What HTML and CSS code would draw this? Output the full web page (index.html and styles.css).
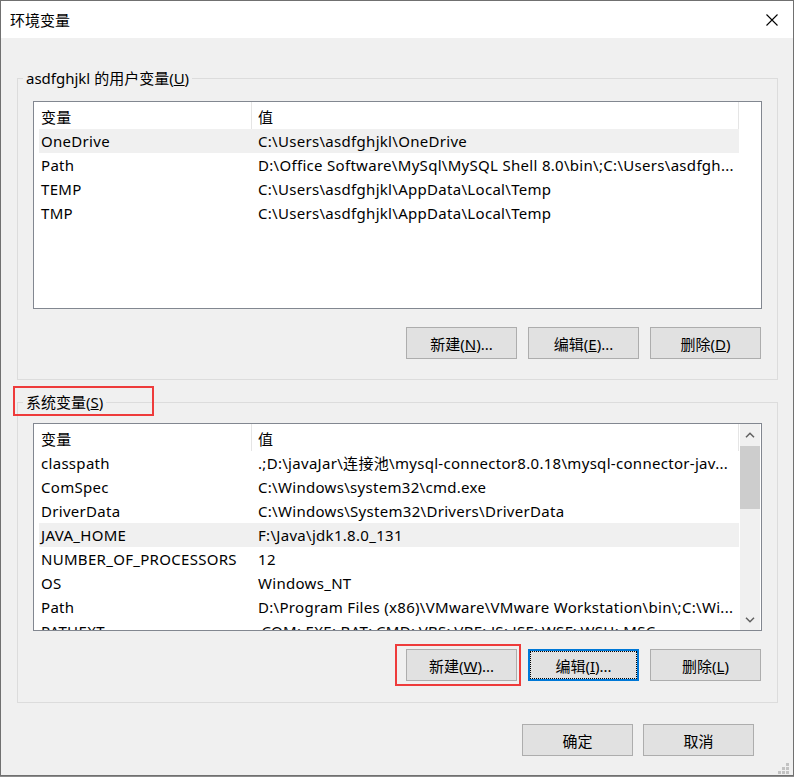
FILE: index.html
```html
<!DOCTYPE html>
<html lang="zh-CN">
<head>
    <meta charset="UTF-8">
    <title>环境变量</title>
    <link rel="stylesheet" href="styles.css">
</head>
<body>
    <div class="window">
        <div class="titlebar">
            <span class="title">环境变量</span>
            <div class="close">
                <svg width="12" height="12" viewBox="0 0 12 12"><path d="M0.5 0.5 L11.5 11.5 M11.5 0.5 L0.5 11.5" stroke="#000" stroke-width="1.1" fill="none"/></svg>
            </div>
        </div>

        <div class="content">
            <!-- user variables -->
            <fieldset class="group group-user">
                <legend>asdfghjkl 的用户变量(<u>U</u>)</legend>
                <div class="list">
                    <div class="list-view">
                        <div class="row head"><span>变量</span><span>值</span></div>
                        <div class="row sel"><span>OneDrive</span><span>C:\Users\asdfghjkl\OneDrive</span></div>
                        <div class="row"><span>Path</span><span>D:\Office Software\MySql\MySQL Shell 8.0\bin\;C:\Users\asdfgh...</span></div>
                        <div class="row"><span>TEMP</span><span>C:\Users\asdfghjkl\AppData\Local\Temp</span></div>
                        <div class="row"><span>TMP</span><span>C:\Users\asdfghjkl\AppData\Local\Temp</span></div>
                    </div>
                </div>
                <div class="buttons">
                    <button class="btn">新建(<u>N</u>)...</button>
                    <button class="btn">编辑(<u>E</u>)...</button>
                    <button class="btn">删除(<u>D</u>)</button>
                </div>
            </fieldset>

            <!-- system variables -->
            <fieldset class="group group-sys">
                <legend>系统变量(<u>S</u>)</legend>
                <div class="list">
                    <div class="list-view">
                        <div class="row head"><span>变量</span><span>值</span></div>
                        <div class="row"><span>classpath</span><span>.;D:\javaJar\连接池\mysql-connector8.0.18\mysql-connector-jav...</span></div>
                        <div class="row"><span>ComSpec</span><span>C:\Windows\system32\cmd.exe</span></div>
                        <div class="row"><span>DriverData</span><span>C:\Windows\System32\Drivers\DriverData</span></div>
                        <div class="row sel"><span>JAVA_HOME</span><span>F:\Java\jdk1.8.0_131</span></div>
                        <div class="row"><span>NUMBER_OF_PROCESSORS</span><span>12</span></div>
                        <div class="row"><span>OS</span><span>Windows_NT</span></div>
                        <div class="row"><span>Path</span><span>D:\Program Files (x86)\VMware\VMware Workstation\bin\;C:\Wi...</span></div>
                        <div class="row"><span>PATHEXT</span><span>.COM;.EXE;.BAT;.CMD;.VBS;.VBE;.JS;.JSE;.WSF;.WSH;.MSC</span></div>
                    </div>
                    <div class="scrollbar">
                        <div class="arrow">
                            <svg width="10" height="6" viewBox="0 0 10 6"><polyline points="1,5.2 5,1.2 9,5.2" stroke="#606060" stroke-width="1.5" fill="none"/></svg>
                        </div>
                        <div class="thumb"></div>
                        <div class="track"></div>
                        <div class="arrow">
                            <svg width="10" height="6" viewBox="0 0 10 6"><polyline points="1,0.8 5,4.8 9,0.8" stroke="#606060" stroke-width="1.5" fill="none"/></svg>
                        </div>
                    </div>
                </div>
                <div class="buttons">
                    <button class="btn">新建(<u>W</u>)...</button>
                    <button class="btn btn-focus">编辑(<u>I</u>)...</button>
                    <button class="btn">删除(<u>L</u>)</button>
                </div>
            </fieldset>

            <div class="dialog-buttons">
                <button class="btn">确定</button>
                <button class="btn">取消</button>
            </div>
        </div>

        <!-- red annotation boxes -->
        <div class="mark mark-label"></div>
        <div class="mark mark-button"></div>

        <svg class="grip" width="11" height="11" viewBox="0 0 11 11" fill="#c2c2c2">
            <rect x="8" y="0" width="3" height="3"/>
            <rect x="4" y="4" width="3" height="3"/><rect x="8" y="4" width="3" height="3"/>
            <rect x="0" y="8" width="3" height="3"/><rect x="4" y="8" width="3" height="3"/><rect x="8" y="8" width="3" height="3"/>
        </svg>
    </div>
</body>
</html>
```

FILE: styles.css
```css
html {
    background-color: #8c8c8c;
}
body {
    margin: 0;
    font-family: "Noto Sans", "Noto Sans CJK SC", sans-serif;
    font-size: 15px;
    color: #000;
}
.window {
    position: relative;
    width: 792px;
    height: 774px;
    border: 1px solid #707070;
    background-color: #f0f0f0;
}
.titlebar {
    height: 37px;
    background-color: #fff;
    display: flex;
    align-items: center;
    justify-content: space-between;
}
.title {
    padding-left: 9px;
    line-height: 20px;
}
.close {
    width: 42px;
    height: 37px;
    display: flex;
    align-items: center;
    justify-content: center;
}
.content {
    padding: 30px 15px 0 16px;
}
.group {
    margin: 0;
    padding: 0 15px 20px;
    border: 1px solid #dcdcdc;
    min-width: 0;
}
.group legend {
    margin-left: -10px;
    padding: 0 3px;
    line-height: 20px;
}
.group-user .list {
    margin-top: 13px;
}
.group-sys {
    margin-top: 12px;
    padding-bottom: 21px;
}
.group-sys .list {
    margin-top: 11px;
}
.list {
    height: 206px;
    border: 1px solid #828790;
    background-color: #fff;
    display: flex;
    overflow: hidden;
}
.list-view {
    flex: 1;
    overflow: hidden;
}
.row {
    display: grid;
    grid-template-columns: 213px 487px;
    width: 700px;
    height: 24px;
    margin-left: 5px;
    line-height: 24px;
    letter-spacing: 0.3px;
    white-space: nowrap;
}
.row span {
    overflow: hidden;
    padding-left: 2px;
}
.row span + span {
    padding-left: 6px;
}
.row.head {
    height: 27px;
}
.row.head span {
    padding-top: 3px;
    border-right: 1px solid #e5e5e5;
}
.row.sel {
    background-color: #f0f0f0;
}
.scrollbar {
    width: 20px;
    margin-right: 1px;
    background-color: #f0f0f0;
    display: flex;
    flex-direction: column;
}
.arrow {
    height: 21px;
    display: flex;
    align-items: center;
    justify-content: center;
}
.thumb {
    margin-top: 1px;
    height: 63px;
    background-color: #cdcdcd;
}
.track {
    flex: 1;
}
.buttons {
    display: flex;
    justify-content: flex-end;
    gap: 11px;
    margin-top: 18px;
    padding-right: 1px;
}
.dialog-buttons {
    display: flex;
    justify-content: flex-end;
    gap: 10px;
    margin-top: 21px;
    padding-right: 24px;
}
.btn {
    width: 111px;
    height: 32px;
    padding: 0;
    border: 1px solid #adadad;
    background-color: #e1e1e1;
    font: inherit;
    color: #000;
}
.btn-focus {
    border: 2px solid #0078d7;
    outline: 1px dotted #000;
    outline-offset: -3px;
}
.mark {
    position: absolute;
    border: 2px solid #ee3b3b;
}
.mark-label {
    left: 12px;
    top: 385px;
    width: 137px;
    height: 26px;
}
.mark-button {
    left: 394px;
    top: 643px;
    width: 122px;
    height: 38px;
}
.grip {
    position: absolute;
    right: 4px;
    bottom: 1px;
}
```
